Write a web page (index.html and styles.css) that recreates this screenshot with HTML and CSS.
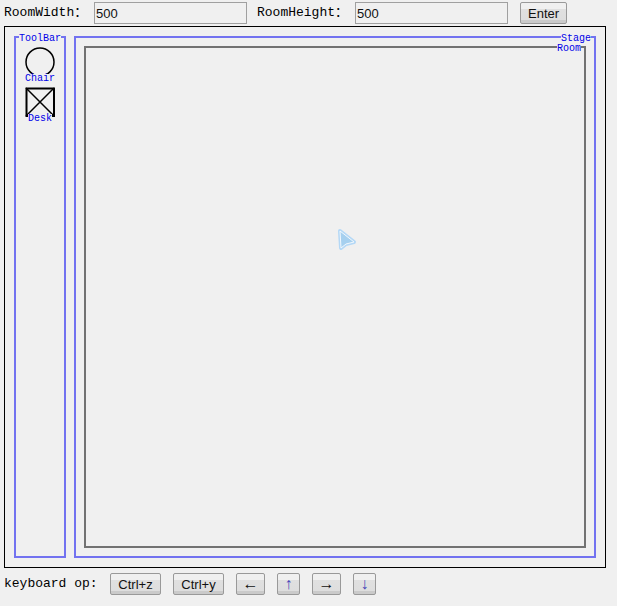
FILE: index.html
```html
<!DOCTYPE html>
<html lang="en">
<head>
<meta charset="utf-8">
<title>Room planner</title>
<link rel="stylesheet" href="styles.css">
</head>
<body>
<form class="settings">
  <label class="caption" for="room-width">RoomWidth：</label>
  <input class="field" id="room-width" type="text" value="500">
  <label class="caption second" for="room-height">RoomHeight：</label>
  <input class="field" id="room-height" type="text" value="500">
  <button class="button enter" type="button">Enter</button>
</form>
<main class="editor">
  <section class="panel toolbar">
    <h2 class="tag left">ToolBar</h2>
    <div class="tool">
      <svg class="shape" viewBox="0 0 30 30"><circle class="thin" cx="15" cy="15" r="14" /></svg>
      <span class="tool-name">Chair</span>
    </div>
    <div class="tool">
      <svg class="shape" viewBox="0 0 30 30"><path d="M1.5 1.5H29V29H1.5Z" /><path class="thin" d="M1 1L29 29M29 1L1 29" /></svg>
      <span class="tool-name">Desk</span>
    </div>
  </section>
  <section class="panel stage">
    <h2 class="tag right">Stage</h2>
    <div class="room">
      <h3 class="tag right">Room</h3>
      <svg class="pointer" viewBox="0 0 22 26">
        <path class="halo" d="M5 4L19 15L11 17L6 21Z" />
        <path class="arrow" d="M5 4L19 15L11 17L6 21Z" />
      </svg>
    </div>
  </section>
</main>
<div class="keys">
  <span class="caption">keyboard op:</span>
  <button class="button command" type="button">Ctrl+z</button>
  <button class="button command" type="button">Ctrl+y</button>
  <button class="button across" type="button">←</button>
  <button class="button updown" type="button">↑</button>
  <button class="button across" type="button">→</button>
  <button class="button updown" type="button">↓</button>
</div>
</body>
</html>
```
FILE: styles.css
```css
* { box-sizing: border-box; }
body {
  margin: 0;
  padding: 2px 11px 8px 4px;
  background: #f0f0f0;
  color: #000;
  font: 13px/24px "Liberation Mono", "Noto Sans CJK SC", monospace;
}
.settings, .keys { display: flex; align-items: center; height: 22px; }
.settings { margin-bottom: 2px; }
.caption { flex: none; width: 90px; white-space: nowrap; }
.caption.second { width: 98px; margin-left: 10px; }
.field {
  width: 153px;
  height: 22px;
  padding: 1px 1px;
  border: 1px solid #a0a0a0;
  border-radius: 0;
  background: #f0f0f0;
  color: #111;
  font: 13px "Liberation Sans", sans-serif;
}
.button {
  flex: none;
  height: 22px;
  padding: 0 7px;
  border: 1px solid #999;
  border-radius: 2px;
  background: linear-gradient(#f0f0f0 30%, #e0e0e0 31%, #dedede 84%, #cacaca 86%);
  color: #111;
  font: 13px "Liberation Sans", sans-serif;
}
.enter { margin-left: 12px; }
.editor {
  display: flex;
  gap: 8px;
  padding: 9px;
  border: 1px solid #000;
}
.panel { position: relative; border: 2px solid #7272f0; }
.toolbar {
  display: flex;
  flex: none;
  flex-direction: column;
  gap: 4px;
  width: 52px;
  padding: 9px;
}
.stage { flex: 1; padding: 8px; }
.room { position: relative; aspect-ratio: 1; border: 2px solid #727272; }
.tag, .tool-name {
  background: #f0f0f0;
  color: #0000e8;
  font: 10px/10px "Liberation Mono", monospace;
}
.tag { position: absolute; top: -4px; margin: 0; }
.left { left: 3px; }
.right { right: 3px; }
.tool {
  display: flex;
  flex-direction: column;
  align-items: center;
  height: 36px;
}
.shape {
  flex: none;
  width: 30px;
  height: 30px;
  fill: none;
  stroke: #000;
  stroke-width: 2;
}
.thin { stroke-width: 1.5; }
.tool-name { position: relative; margin-top: -3px; }
.pointer {
  position: absolute;
  top: 36%;
  left: 50%;
  width: 22px;
  height: 26px;
}
.halo { fill: none; stroke: #b4d8f6; stroke-width: 4; stroke-linejoin: round; }
.arrow { fill: #a6d0ef; stroke: #f2f8fd; stroke-width: 1; stroke-linejoin: round; }
.keys { gap: 12px; margin-top: 5px; }
.keys .caption { width: 94px; }
.command { width: 51px; padding: 0; }
.across, .updown {
  padding: 0;
  font: 16px/20px "Liberation Serif", serif;
}
.across { width: 29px; }
.updown { width: 23px; color: #4848b8; }
.updown + .across, .across + .updown { margin: 0; }
```
